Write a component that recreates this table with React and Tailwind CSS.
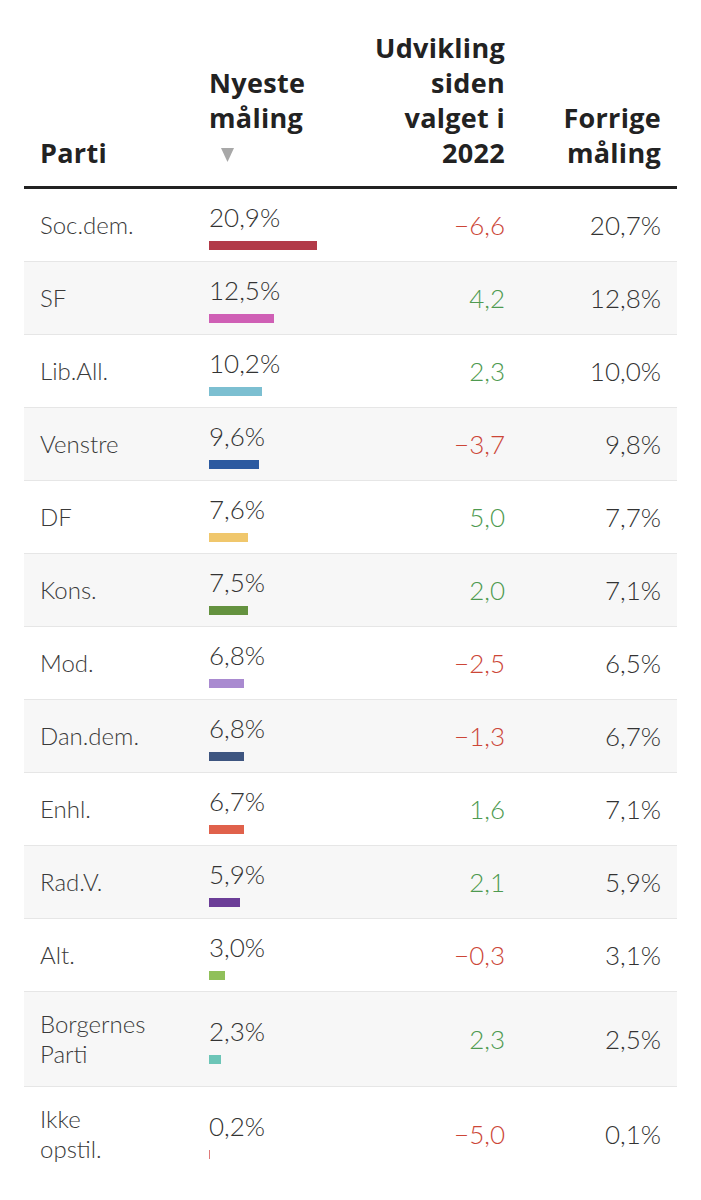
import React from 'react';

// Party poll table
const rows = [
  { name: ['Soc.dem.'], now: 20.9, change: '−6,6', prev: '20,7%', color: '#b23a48' },
  { name: ['SF'], now: 12.5, change: '4,2', prev: '12,8%', color: '#cf5fb5' },
  { name: ['Lib.All.'], now: 10.2, change: '2,3', prev: '10,0%', color: '#7cbfd1' },
  { name: ['Venstre'], now: 9.6, change: '−3,7', prev: '9,8%', color: '#2c5aa0' },
  { name: ['DF'], now: 7.6, change: '5,0', prev: '7,7%', color: '#f0c76c' },
  { name: ['Kons.'], now: 7.5, change: '2,0', prev: '7,1%', color: '#64923f' },
  { name: ['Mod.'], now: 6.8, change: '−2,5', prev: '6,5%', color: '#a98ad0' },
  { name: ['Dan.dem.'], now: 6.8, change: '−1,3', prev: '6,7%', color: '#3e5580' },
  { name: ['Enhl.'], now: 6.7, change: '1,6', prev: '7,1%', color: '#e0614b' },
  { name: ['Rad.V.'], now: 5.9, change: '2,1', prev: '5,9%', color: '#6b3d97' },
  { name: ['Alt.'], now: 3.0, change: '−0,3', prev: '3,1%', color: '#90c05a' },
  { name: ['Borgernes', 'Parti'], now: 2.3, change: '2,3', prev: '2,5%', color: '#6cc5b7' },
  { name: ['Ikke', 'opstil.'], now: 0.2, change: '−5,0', prev: '0,1%', color: '#e07a7a' },
];

const fmt = (v) => v.toFixed(1).replace('.', ',') + '%';

const cols = 'grid grid-cols-[169px_160px_168px_156px]';

const App = () => {
  return (
    <div className="min-h-screen bg-white px-6 pt-[30px]">
      {/* Header */}
      <div
        className={`${cols} items-end border-b-[3px] border-[#222] text-[27px] leading-[35px] font-bold tracking-[0.3px] text-[#222]`}
        style={{ fontFamily: '"Open Sans", sans-serif' }}
      >
        <div className="pl-4 pb-4">Parti</div>
        <div className="pl-4 pb-4">
          Nyeste
          <br />
          måling
          <div className="h-[35px]">
            <svg className="ml-[12px] pt-[13px] w-[13px] h-[27px]" viewBox="0 0 13 14">
              <path d="M0 0 H13 L6.5 14 Z" fill="#a8a8a8" />
            </svg>
          </div>
        </div>
        <div className="pr-4 pb-4 text-right">
          Udvikling
          <br />
          siden
          <br />
          valget i
          <br />
          2022
        </div>
        <div className="pr-4 pb-4 text-right">
          Forrige
          <br />
          måling
        </div>
      </div>

      {/* Rows */}
      <div style={{ fontFamily: 'Lato, sans-serif' }}>
        {rows.map((r, i) => (
          <div
            key={i}
            className={`${cols} items-center font-light ${i % 2 === 1 ? 'bg-[#f7f7f7]' : 'bg-white'} ${
              i < rows.length - 1 ? 'border-b border-[#e6e6e6]' : ''
            }`}
          >
            <div className="pl-4 py-[17px] text-[24px] leading-[30px] text-[#3a3a3a]">
              {r.name.map((n, j) => (
                <div key={j}>{n}</div>
              ))}
            </div>
            <div className="pl-4 pt-[14px] pb-[11px]">
              <div className="text-[26px] leading-[28px] text-[#333]">{fmt(r.now)}</div>
              <div className="mt-[10px] h-[9px]" style={{ width: Math.max(1, r.now * 5.17), backgroundColor: r.color }} />
            </div>
            <div
              className={`pr-4 text-right text-[26px] leading-[30px] ${
                r.change.startsWith('−') ? 'text-[#cc4637]' : 'text-[#4e9a50]'
              }`}
            >
              {r.change}
            </div>
            <div className="pr-4 text-right text-[26px] leading-[30px] text-[#333]">{r.prev}</div>
          </div>
        ))}
      </div>
    </div>
  );
};

export default App;
